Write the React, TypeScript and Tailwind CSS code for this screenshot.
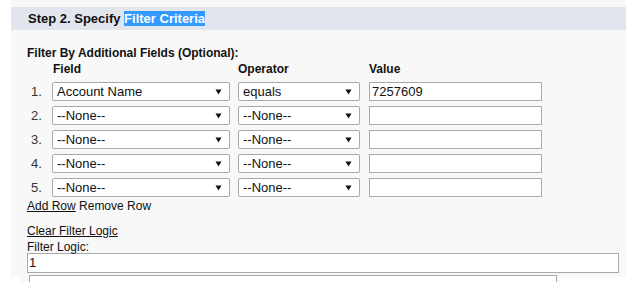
import React from "react";

const Arrow = () => (
  <svg width="7" height="6" viewBox="0 0 7 6" className="shrink-0">
    <polygon points="0.5,0.5 6.5,0.5 3.5,5.5" fill="#111" />
  </svg>
);

function Select({ value, width }: { value: string; width: string }) {
  return (
    <div
      className={`${width} h-[19px] bg-white border border-[#a9a9a9] rounded-[2px] flex items-center justify-between pl-[4px] pr-[7px] text-[13px] leading-[17px] text-[#111]`}
    >
      <span>{value}</span>
      <Arrow />
    </div>
  );
}

function Row({ n, field, op, val }: { n: number; field: string; op: string; val: string }) {
  return (
    <div className="flex items-center h-[19px]">
      <div className="w-[25px] pl-[4px] text-[13px] text-[#333]">{n}.</div>
      <Select value={field} width="w-[178px]" />
      <div className="w-[8px]" />
      <Select value={op} width="w-[122px]" />
      <div className="w-[9px]" />
      <div className="w-[173px] h-[19px] bg-white border border-[#a9a9a9] pl-[2px] text-[13px] leading-[17px] text-[#111]">
        {val}
      </div>
    </div>
  );
}

export default function App() {
  return (
    <div
      className="w-[632px] h-[282px] bg-white overflow-hidden"
      style={{ fontFamily: '"Liberation Sans", Arial, sans-serif' }}
    >
      <div className="ml-[11px] w-[615px] h-[277px] bg-[#f8f8f8] pt-[7px]">
        <div className="h-[23px] bg-[#e1e6ee] pl-[17px] flex items-center">
          <span className="text-[13px] font-bold leading-[15px] text-[#111]">
            Step 2. Specify <span className="bg-[#3399ff] text-white">Filter Criteria</span>
          </span>
        </div>
        <div className="pl-[16px]">
          <div className="mt-[16px] text-[12px] font-bold leading-[14px] text-[#111]">
            Filter By Additional Fields (Optional):
          </div>
          <div className="mt-[2px] flex text-[12px] font-bold leading-[14px] text-[#111]">
            <div className="w-[26px]" />
            <div className="w-[185px]">Field</div>
            <div className="w-[131px]">Operator</div>
            <div>Value</div>
          </div>
          <div className="mt-[6px] flex flex-col gap-[5px]">
            <Row n={1} field="Account Name" op="equals" val="7257609" />
            <Row n={2} field="--None--" op="--None--" val="" />
            <Row n={3} field="--None--" op="--None--" val="" />
            <Row n={4} field="--None--" op="--None--" val="" />
            <Row n={5} field="--None--" op="--None--" val="" />
          </div>
          <div className="mt-[2px] text-[12px] leading-[14px] text-[#111]">
            <span className="underline">Add Row</span> Remove Row
          </div>
          <div className="mt-[11px] text-[12px] leading-[14px] text-[#111] underline">
            Clear Filter Logic
          </div>
          <div className="mt-[2px] text-[12px] leading-[14px] text-[#111]">Filter Logic:</div>
          <div className="mt-[-1px] w-[592px] h-[20px] bg-white border border-[#a9a9a9] pl-[1px] text-[13px] leading-[18px] text-[#111]">
            1
          </div>
          <div className="ml-[-7px] mt-[2px] w-[540px] h-[10px] bg-[#f8f8f8] pl-[9px]">
            <div className="w-[528px] h-[10px] border-t border-x border-[#a9a9a9] bg-white" />
          </div>
        </div>
      </div>
    </div>
  );
}
